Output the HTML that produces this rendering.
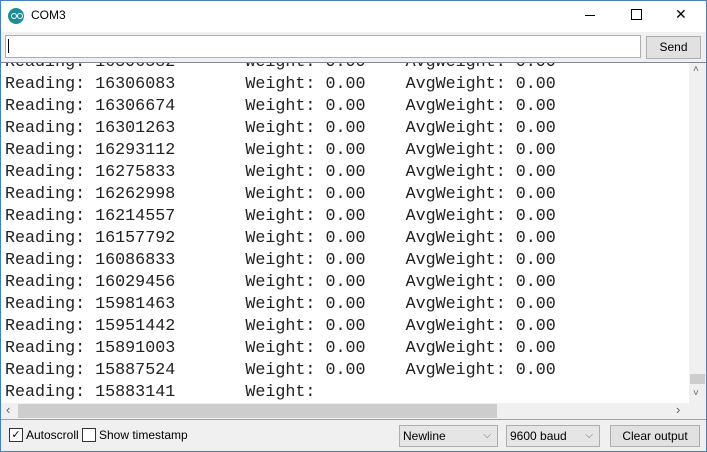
<!DOCTYPE html><html><head><style>
body{margin:0;width:707px;height:452px;overflow:hidden;background:#f0f0f0;font-family:"Liberation Sans",sans-serif;position:relative}
.abs{position:absolute}
.mono{font-family:"Liberation Mono",monospace;font-size:16.7px;white-space:pre;color:#222}
</style></head><body>
<div class="abs" style="left:0;top:0;width:707px;height:452px;box-sizing:border-box;border:1px solid #4a7fb5"></div>
<div class="abs" style="left:1px;top:1px;width:705px;height:31px;background:#fff"></div>
<div class="abs" style="left:8px;top:8px;width:16px;height:16px;border-radius:50%;background:#1a8f97"></div>
<div class="abs" style="left:11px;top:13px;width:4px;height:4px;border:1px solid #fff;border-radius:50%"></div>
<div class="abs" style="left:17px;top:13px;width:4px;height:4px;border:1px solid #fff;border-radius:50%"></div>
<div class="abs" style="left:31px;top:8px;font-size:12px;color:#000">COM3</div>
<div class="abs" style="left:585px;top:15px;width:10px;height:1px;background:#000"></div>
<div class="abs" style="left:631px;top:9px;width:9px;height:9px;border:1px solid #000"></div>
<div class="abs" style="left:675px;top:6px;font-size:14px;color:#000">✕</div>
<div class="abs" style="left:5px;top:35px;width:634px;height:21px;background:#fff;border:1px solid #adadad"></div>
<div class="abs" style="left:8px;top:39px;width:1px;height:14px;background:#000"></div>
<div class="abs" style="left:646px;top:36px;width:53px;height:21px;background:#e1e1e1;border:1px solid #adadad;font-size:12px;text-align:center;line-height:21px">Send</div>
<div class="abs" style="left:1px;top:62px;width:705px;height:1px;background:#828790"></div>
<div class="abs" style="left:1px;top:63px;width:688px;height:340px;background:#fff;overflow:hidden">
<div class="mono abs" style="left:4px;top:-11px;line-height:22px">Reading: 16306582       Weight: 0.00    AvgWeight: 0.00
Reading: 16306083       Weight: 0.00    AvgWeight: 0.00
Reading: 16306674       Weight: 0.00    AvgWeight: 0.00
Reading: 16301263       Weight: 0.00    AvgWeight: 0.00
Reading: 16293112       Weight: 0.00    AvgWeight: 0.00
Reading: 16275833       Weight: 0.00    AvgWeight: 0.00
Reading: 16262998       Weight: 0.00    AvgWeight: 0.00
Reading: 16214557       Weight: 0.00    AvgWeight: 0.00
Reading: 16157792       Weight: 0.00    AvgWeight: 0.00
Reading: 16086833       Weight: 0.00    AvgWeight: 0.00
Reading: 16029456       Weight: 0.00    AvgWeight: 0.00
Reading: 15981463       Weight: 0.00    AvgWeight: 0.00
Reading: 15951442       Weight: 0.00    AvgWeight: 0.00
Reading: 15891003       Weight: 0.00    AvgWeight: 0.00
Reading: 15887524       Weight: 0.00    AvgWeight: 0.00
Reading: 15883141       Weight:</div></div>
<div class="abs" style="left:689px;top:63px;width:17px;height:340px;background:#f0f0f0"></div>
<div class="abs" style="left:690px;top:374px;width:15px;height:10px;background:#cdcdcd"></div>
<div class="abs" style="left:693px;top:64px;font-size:10px;color:#606060">˄</div>
<div class="abs" style="left:693px;top:388px;font-size:10px;color:#606060">˅</div>
<div class="abs" style="left:1px;top:403px;width:705px;height:16px;background:#f0f0f0"></div>
<div class="abs" style="left:18px;top:404px;width:479px;height:14px;background:#cdcdcd"></div>
<div class="abs" style="left:6px;top:402px;font-size:13px;color:#606060">‹</div>
<div class="abs" style="left:676px;top:402px;font-size:13px;color:#606060">›</div>
<div class="abs" style="left:1px;top:419px;width:705px;height:1px;background:#a0a0a0"></div>
<div class="abs" style="left:9px;top:428px;width:12px;height:12px;border:1px solid #333;background:#fff;font-size:11px;line-height:12px;text-align:center">✓</div>
<div class="abs" style="left:26px;top:428px;font-size:12px">Autoscroll</div>
<div class="abs" style="left:82px;top:428px;width:12px;height:12px;border:1px solid #333;background:#fff"></div>
<div class="abs" style="left:99px;top:428px;font-size:12px">Show timestamp</div>
<div class="abs" style="left:399px;top:425px;border:1px solid #adadad;background:#e5e5e5;font-size:12px;line-height:20px;padding-left:3px;box-sizing:border-box;width:99px;height:22px">Newline<span style="position:absolute;right:6px;color:#666;font-size:10px">⌵</span></div>
<div class="abs" style="left:506px;top:425px;width:94px;height:22px;border:1px solid #adadad;background:#e5e5e5;font-size:12px;line-height:20px;padding-left:3px;box-sizing:border-box">9600 baud<span style="position:absolute;right:6px;color:#666;font-size:10px">⌵</span></div>
<div class="abs" style="left:610px;top:425px;width:90px;height:22px;border:1px solid #adadad;background:#e1e1e1;font-size:12px;line-height:20px;text-align:center;box-sizing:border-box">Clear output</div>
</body></html>
